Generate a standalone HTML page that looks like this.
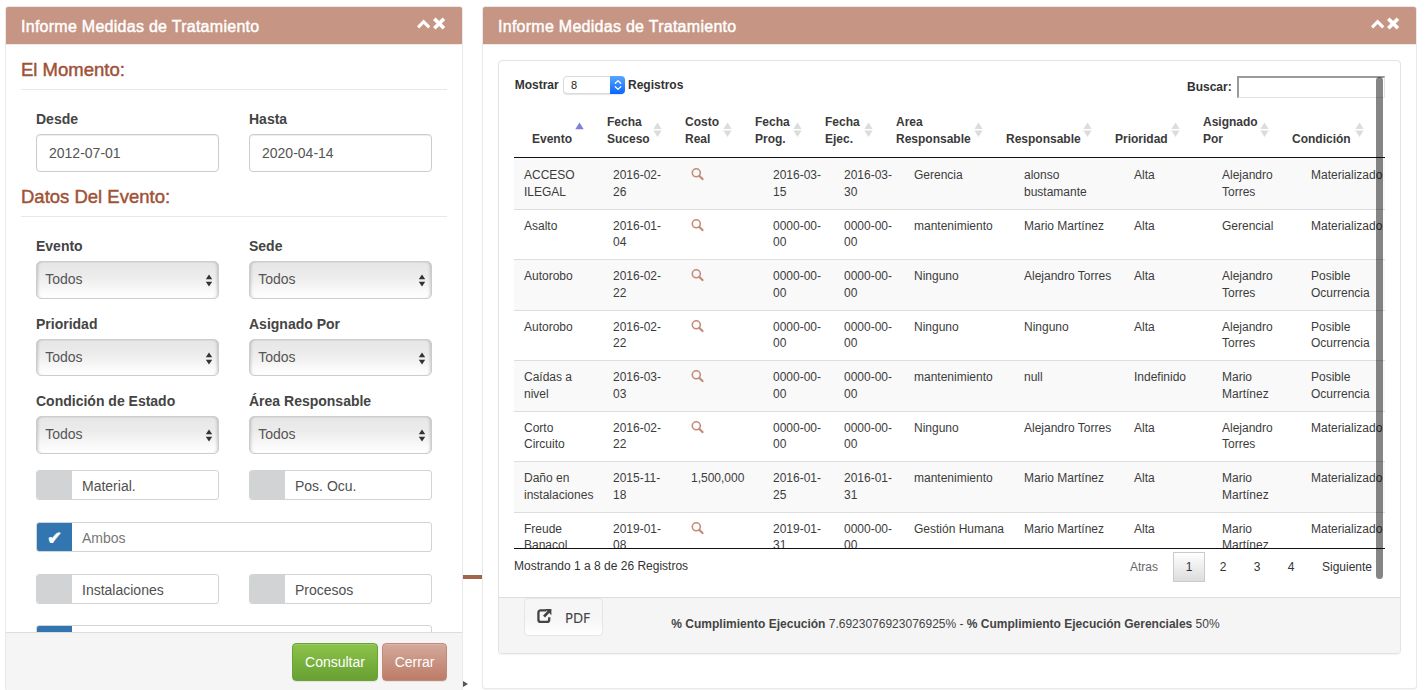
<!DOCTYPE html>
<html lang="es">
<head>
<meta charset="utf-8">
<title>Informe Medidas de Tratamiento</title>
<style>
*{box-sizing:border-box;}
html,body{margin:0;padding:0;}
body{width:1425px;height:690px;overflow:hidden;background:#fff;font-family:"Liberation Sans",Arial,Helvetica,sans-serif;font-size:14px;line-height:20px;color:#333;position:relative;}
.abs{position:absolute;}

/* ---------- panels ---------- */
.panel{position:absolute;background:#fff;border:1px solid #e9e9e9;border-radius:3px;box-shadow:0 1px 1px rgba(0,0,0,.05);}
.phead{position:absolute;left:0;right:0;top:0;height:37px;box-shadow:0 1px 0 #ececec;background:#c79584;border-radius:2px 2px 0 0;color:#fff;}
.ptitle{position:absolute;left:15px;top:10px;font-size:16px;line-height:20px;white-space:nowrap;letter-spacing:0.27px;-webkit-text-stroke:0.45px #fff;}
.picons{position:absolute;top:0;right:0;}

#left{left:5px;top:6px;width:458px;height:685px;}
#right{left:482px;top:6px;width:935px;height:683px;}

.legend{position:absolute;left:15px;width:426px;font-size:18.5px;line-height:26px;color:#9e5236;white-space:nowrap;-webkit-text-stroke:0.45px #9e5236;}
.lline{position:absolute;left:15px;width:426px;height:1px;background:#e8e8e8;}
.lbl{position:absolute;font-weight:bold;font-size:14px;line-height:20px;color:#444;white-space:nowrap;}
.inp{position:absolute;width:183px;height:37.5px;border:1px solid #ccc;border-radius:4px;background:#fff;box-shadow:inset 0 1px 1px rgba(0,0,0,.075);font-size:14px;line-height:37px;padding-left:12px;color:#555;}
.sel{position:absolute;width:183px;height:37.5px;border:1px solid #cdcdcd;border-radius:5px;background:linear-gradient(#e6e6e6 0%,#ececec 40%,#fbfbfb 85%,#fff 100%);box-shadow:inset 3px 0 3px -2px rgba(0,0,0,.18),inset -3px 0 3px -2px rgba(0,0,0,.18),inset 0 1px 1px rgba(0,0,0,.05);font-size:14px;line-height:35px;padding-left:8.2px;color:#555;}
.sel svg{position:absolute;right:5px;top:12px;}
.tog{position:absolute;height:29.5px;border:1px solid #d1d3d4;border-radius:3px;background:#fff;font-size:14px;line-height:30px;color:#505050;padding-left:45px;white-space:nowrap;overflow:hidden;}
.tog:before{content:"";position:absolute;left:0;top:0;bottom:0;width:35px;background:#d1d3d4;}
.tog.on{color:#777;}
.tog.on:before{background:#3276b1;}
.tog .ck{position:absolute;left:0;top:0;width:35px;text-align:center;color:#fff;font-size:18px;line-height:29px;font-family:"DejaVu Sans",sans-serif;-webkit-text-stroke:0.7px #fff;}

.lfoot{position:absolute;left:0;right:0;top:625px;bottom:0;background:#f5f5f5;border-top:1px solid #ddd;border-radius:0 0 3px 3px;}
.btn{position:absolute;height:38px;border-radius:4px;color:#fff;font-size:14px;line-height:36px;text-align:center;border:1px solid transparent;box-shadow:inset 0 1px 0 rgba(255,255,255,.15),0 1px 1px rgba(0,0,0,.075);}
.b-ok{left:286px;top:10px;width:86px;background:linear-gradient(#8bc34a,#68a033);border-color:#6aa234;}
.b-cl{left:376px;top:10px;width:65px;background:linear-gradient(#d4a99b,#bc7c67);border-color:#c18977;}

/* ---------- right ---------- */
.well{position:absolute;left:15px;top:53px;width:903px;height:594px;border:1px solid #e3e3e3;border-radius:4px;background:#fff;box-shadow:0 1px 1px rgba(0,0,0,.05);}
.wfoot{position:absolute;left:0;right:0;bottom:0;height:56px;background:#f5f5f5;border-top:1px solid #ddd;border-radius:0 0 3px 3px;}
.t12{font-size:12px;line-height:17px;color:#333;white-space:nowrap;}
.b{font-weight:bold;}
table{border-collapse:separate;border-spacing:0;table-layout:fixed;}
#thead th{font-size:12px;line-height:17px;font-weight:bold;color:#3a3a3a;text-align:left;vertical-align:bottom;padding:10px 18px;position:relative;white-space:nowrap;}
#thead th .srt{position:absolute;right:0;top:50%;margin-top:-11px;}
#tbody td{font-size:12px;line-height:16.75px;color:#3c3c3c;vertical-align:top;padding:8px 10px;border-top:1px solid #ddd;white-space:nowrap;}
#tbody tr:first-child td{border-top-color:#f9f9f9;}
#tbody tr:nth-child(odd) td{background:#f9f9f9;}
#tbody .mag{display:block;margin-top:0;}
.pg{position:absolute;top:552px;height:29.5px;font-size:12px;line-height:31px;color:#333;text-align:center;white-space:nowrap;}
</style>
</head>
<body>

<!-- background bits between the panels -->
<div class="abs" style="left:462px;top:575px;width:21px;height:4px;background:#a4634b;"></div>
<div class="abs" style="left:463px;top:681px;width:0;height:0;border-left:5px solid #555;border-top:3.5px solid transparent;border-bottom:3.5px solid transparent;"></div>

<!-- ================= LEFT PANEL ================= -->
<div class="panel" id="left">
  <div class="phead">
    <div class="ptitle">Informe Medidas de Tratamiento</div>
    <svg class="abs" style="left:410px;top:10px" width="32" height="16" viewBox="0 0 32 16">
      <path d="M1 9.2 L7.6 2.5 L14.3 9.2 L12.1 11.4 L7.6 6.9 L3.2 11.4 Z" fill="#fff"/>
      <path d="M17 3 L19.6 0.4 L23.1 3.9 L26.6 0.4 L29.2 3 L25.7 6.5 L29.2 10 L26.6 12.6 L23.1 9.1 L19.6 12.6 L17 10 L20.5 6.5 Z" fill="#fff"/>
    </svg>
  </div>

  <div class="abs" style="left:0;top:0;width:456px;height:0">
  <div class="legend" style="top:49.75px">El Momento:</div><div class="lline" style="top:82px"></div>
  <div class="lbl" style="left:30px;top:102px">Desde</div>
  <div class="lbl" style="left:243px;top:102px">Hasta</div>
  <div class="inp" style="left:30px;top:127px">2012-07-01</div>
  <div class="inp" style="left:243px;top:127px">2020-04-14</div>

  <div class="legend" style="top:176.75px">Datos Del Evento:</div><div class="lline" style="top:209px"></div>

  <div class="lbl" style="left:30px;top:229px">Evento</div>
  <div class="lbl" style="left:243px;top:229px">Sede</div>
  <div class="sel" style="left:30px;top:254px">Todos<svg width="8" height="13" viewBox="0 0 8 13"><path d="M4 0.5 L7.2 5.3 L0.8 5.3 Z M4 12.5 L7.2 7.7 L0.8 7.7 Z" fill="#333"/></svg></div>
  <div class="sel" style="left:243px;top:254px">Todos<svg width="8" height="13" viewBox="0 0 8 13"><path d="M4 0.5 L7.2 5.3 L0.8 5.3 Z M4 12.5 L7.2 7.7 L0.8 7.7 Z" fill="#333"/></svg></div>

  <div class="lbl" style="left:30px;top:306.5px">Prioridad</div>
  <div class="lbl" style="left:243px;top:306.5px">Asignado Por</div>
  <div class="sel" style="left:30px;top:331.5px">Todos<svg width="8" height="13" viewBox="0 0 8 13"><path d="M4 0.5 L7.2 5.3 L0.8 5.3 Z M4 12.5 L7.2 7.7 L0.8 7.7 Z" fill="#333"/></svg></div>
  <div class="sel" style="left:243px;top:331.5px">Todos<svg width="8" height="13" viewBox="0 0 8 13"><path d="M4 0.5 L7.2 5.3 L0.8 5.3 Z M4 12.5 L7.2 7.7 L0.8 7.7 Z" fill="#333"/></svg></div>

  <div class="lbl" style="left:30px;top:384px">Condición de Estado</div>
  <div class="lbl" style="left:243px;top:384px">Área Responsable</div>
  <div class="sel" style="left:30px;top:409px">Todos<svg width="8" height="13" viewBox="0 0 8 13"><path d="M4 0.5 L7.2 5.3 L0.8 5.3 Z M4 12.5 L7.2 7.7 L0.8 7.7 Z" fill="#333"/></svg></div>
  <div class="sel" style="left:243px;top:409px">Todos<svg width="8" height="13" viewBox="0 0 8 13"><path d="M4 0.5 L7.2 5.3 L0.8 5.3 Z M4 12.5 L7.2 7.7 L0.8 7.7 Z" fill="#333"/></svg></div>

  <div class="tog" style="left:30px;top:463px;width:183px">Material.</div>
  <div class="tog" style="left:243px;top:463px;width:183px">Pos. Ocu.</div>
  <div class="tog on" style="left:30px;top:515px;width:396px"><span class="ck">✔</span>Ambos</div>
  <div class="tog" style="left:30px;top:567px;width:183px">Instalaciones</div>
  <div class="tog" style="left:243px;top:567px;width:183px">Procesos</div>
  <div class="tog on" style="left:30px;top:618px;width:396px"><span class="ck">✔</span>Ambos</div>

  </div>
  <div class="lfoot">
    <div class="btn b-ok">Consultar</div>
    <div class="btn b-cl">Cerrar</div>
  </div>
</div>

<!-- ================= RIGHT PANEL ================= -->
<div class="panel" id="right">
  <div class="phead">
    <div class="ptitle">Informe Medidas de Tratamiento</div>
    <svg class="abs" style="left:887px;top:10px" width="32" height="16" viewBox="0 0 32 16">
      <path d="M1 9.2 L7.6 2.5 L14.3 9.2 L12.1 11.4 L7.6 6.9 L3.2 11.4 Z" fill="#fff"/>
      <path d="M17 3 L19.6 0.4 L23.1 3.9 L26.6 0.4 L29.2 3 L25.7 6.5 L29.2 10 L26.6 12.6 L23.1 9.1 L19.6 12.6 L17 10 L20.5 6.5 Z" fill="#fff"/>
    </svg>
  </div>

  <div class="well">
    <div class="wfoot"></div>
  </div>
</div>

<!-- right-panel contents, absolutely placed in page coordinates -->
<div class="abs t12 b" style="left:514.7px;top:76.6px">Mostrar</div>
<div class="abs" style="left:563px;top:76px;width:62px;height:17.5px;border:1px solid #dadada;border-radius:4px;background:#fff;box-shadow:0 1px 1px rgba(0,0,0,.1);font-size:11px;line-height:16.5px;padding-left:7px;color:#222;">8
  <div class="abs" style="right:-1px;top:-1px;width:15px;height:17.5px;background:linear-gradient(#58a7fb,#0866fe);border-radius:0 4px 4px 0;">
    <svg class="abs" style="left:3.5px;top:3px" width="8" height="12" viewBox="0 0 8 12"><path d="M1.3 4.3 L4 1.6 L6.7 4.3 M1.3 7.7 L4 10.4 L6.7 7.7" fill="none" stroke="#fff" stroke-width="1.3" stroke-linecap="round" stroke-linejoin="round"/></svg>
  </div>
</div>
<div class="abs t12 b" style="left:628px;top:76.6px">Registros</div>

<div class="abs t12 b" style="left:1187px;top:79px">Buscar:</div>
<div class="abs" style="left:1237px;top:76px;width:148px;height:21.5px;background:#fff;border-top:2px solid #9a9a9a;border-left:2px solid #9a9a9a;border-bottom:1px solid #e3e3e3;border-right:1px solid #e3e3e3;"></div>

<!-- header table -->
<div class="abs" style="left:514px;top:104px;width:871px;height:54px;border-bottom:1px solid #111;overflow:hidden;">
  <table id="thead" style="width:854.5px;height:53px"><thead><tr><th style="width:75px">Evento<svg class="srt" viewBox="0 0 19 19" width="19" height="19"><path d="M9.5 2.5 L13.7 9.3 L5.3 9.3 Z" fill="#8080d8"/></svg></th><th style="width:78px">Fecha<br>Suceso<svg class="srt" viewBox="0 0 19 19" width="19" height="19"><path d="M9.5 2.5 L13.6 9 L5.4 9 Z M9.5 17 L13.6 10.5 L5.4 10.5 Z" fill="#dcdcdc"/></svg></th><th style="width:70px">Costo<br>Real<svg class="srt" viewBox="0 0 19 19" width="19" height="19"><path d="M9.5 2.5 L13.6 9 L5.4 9 Z M9.5 17 L13.6 10.5 L5.4 10.5 Z" fill="#dcdcdc"/></svg></th><th style="width:70px">Fecha<br>Prog.<svg class="srt" viewBox="0 0 19 19" width="19" height="19"><path d="M9.5 2.5 L13.6 9 L5.4 9 Z M9.5 17 L13.6 10.5 L5.4 10.5 Z" fill="#dcdcdc"/></svg></th><th style="width:71px">Fecha<br>Ejec.<svg class="srt" viewBox="0 0 19 19" width="19" height="19"><path d="M9.5 2.5 L13.6 9 L5.4 9 Z M9.5 17 L13.6 10.5 L5.4 10.5 Z" fill="#dcdcdc"/></svg></th><th style="width:110px">Area<br>Responsable<svg class="srt" viewBox="0 0 19 19" width="19" height="19"><path d="M9.5 2.5 L13.6 9 L5.4 9 Z M9.5 17 L13.6 10.5 L5.4 10.5 Z" fill="#dcdcdc"/></svg></th><th style="width:109px">Responsable<svg class="srt" viewBox="0 0 19 19" width="19" height="19"><path d="M9.5 2.5 L13.6 9 L5.4 9 Z M9.5 17 L13.6 10.5 L5.4 10.5 Z" fill="#dcdcdc"/></svg></th><th style="width:88px">Prioridad<svg class="srt" viewBox="0 0 19 19" width="19" height="19"><path d="M9.5 2.5 L13.6 9 L5.4 9 Z M9.5 17 L13.6 10.5 L5.4 10.5 Z" fill="#dcdcdc"/></svg></th><th style="width:89px">Asignado<br>Por<svg class="srt" viewBox="0 0 19 19" width="19" height="19"><path d="M9.5 2.5 L13.6 9 L5.4 9 Z M9.5 17 L13.6 10.5 L5.4 10.5 Z" fill="#dcdcdc"/></svg></th><th style="width:94.5px">Condición<svg class="srt" viewBox="0 0 19 19" width="19" height="19"><path d="M9.5 2.5 L13.6 9 L5.4 9 Z M9.5 17 L13.6 10.5 L5.4 10.5 Z" fill="#dcdcdc"/></svg></th></tr></thead></table>
</div>
<!-- body table -->
<div class="abs" style="left:514px;top:158px;width:871px;height:391px;border-bottom:1px solid #111;overflow:hidden;">
  <table id="tbody" style="width:887px"><colgroup><col style="width:89px"><col style="width:78px"><col style="width:82px"><col style="width:71px"><col style="width:70px"><col style="width:110px"><col style="width:110px"><col style="width:88px"><col style="width:89px"><col style="width:100px"></colgroup><tbody>
<tr><td>ACCESO<br>ILEGAL</td><td>2016-02-<br>26</td><td><svg class="mag" viewBox="0 0 14 14" width="14" height="14"><circle cx="5.3" cy="5.8" r="4" fill="none" stroke="#c48b78" stroke-width="1.6"/><path d="M8.4 8.9 L11.5 12.1" stroke="#c48b78" stroke-width="2.2" stroke-linecap="round"/></svg></td><td>2016-03-<br>15</td><td>2016-03-<br>30</td><td>Gerencia</td><td>alonso<br>bustamante</td><td>Alta</td><td>Alejandro<br>Torres</td><td>Materializado</td></tr>
<tr><td>Asalto</td><td>2016-01-<br>04</td><td><svg class="mag" viewBox="0 0 14 14" width="14" height="14"><circle cx="5.3" cy="5.8" r="4" fill="none" stroke="#c48b78" stroke-width="1.6"/><path d="M8.4 8.9 L11.5 12.1" stroke="#c48b78" stroke-width="2.2" stroke-linecap="round"/></svg></td><td>0000-00-<br>00</td><td>0000-00-<br>00</td><td>mantenimiento</td><td>Mario Martínez</td><td>Alta</td><td>Gerencial</td><td>Materializado</td></tr>
<tr><td>Autorobo</td><td>2016-02-<br>22</td><td><svg class="mag" viewBox="0 0 14 14" width="14" height="14"><circle cx="5.3" cy="5.8" r="4" fill="none" stroke="#c48b78" stroke-width="1.6"/><path d="M8.4 8.9 L11.5 12.1" stroke="#c48b78" stroke-width="2.2" stroke-linecap="round"/></svg></td><td>0000-00-<br>00</td><td>0000-00-<br>00</td><td>Ninguno</td><td>Alejandro Torres</td><td>Alta</td><td>Alejandro<br>Torres</td><td>Posible<br>Ocurrencia</td></tr>
<tr><td>Autorobo</td><td>2016-02-<br>22</td><td><svg class="mag" viewBox="0 0 14 14" width="14" height="14"><circle cx="5.3" cy="5.8" r="4" fill="none" stroke="#c48b78" stroke-width="1.6"/><path d="M8.4 8.9 L11.5 12.1" stroke="#c48b78" stroke-width="2.2" stroke-linecap="round"/></svg></td><td>0000-00-<br>00</td><td>0000-00-<br>00</td><td>Ninguno</td><td>Ninguno</td><td>Alta</td><td>Alejandro<br>Torres</td><td>Posible<br>Ocurrencia</td></tr>
<tr><td>Caídas a<br>nivel</td><td>2016-03-<br>03</td><td><svg class="mag" viewBox="0 0 14 14" width="14" height="14"><circle cx="5.3" cy="5.8" r="4" fill="none" stroke="#c48b78" stroke-width="1.6"/><path d="M8.4 8.9 L11.5 12.1" stroke="#c48b78" stroke-width="2.2" stroke-linecap="round"/></svg></td><td>0000-00-<br>00</td><td>0000-00-<br>00</td><td>mantenimiento</td><td>null</td><td>Indefinido</td><td>Mario<br>Martínez</td><td>Posible<br>Ocurrencia</td></tr>
<tr><td>Corto<br>Circuito</td><td>2016-02-<br>22</td><td><svg class="mag" viewBox="0 0 14 14" width="14" height="14"><circle cx="5.3" cy="5.8" r="4" fill="none" stroke="#c48b78" stroke-width="1.6"/><path d="M8.4 8.9 L11.5 12.1" stroke="#c48b78" stroke-width="2.2" stroke-linecap="round"/></svg></td><td>0000-00-<br>00</td><td>0000-00-<br>00</td><td>Ninguno</td><td>Alejandro Torres</td><td>Alta</td><td>Alejandro<br>Torres</td><td>Materializado</td></tr>
<tr><td>Daño en<br>instalaciones</td><td>2015-11-<br>18</td><td>1,500,000</td><td>2016-01-<br>25</td><td>2016-01-<br>31</td><td>mantenimiento</td><td>Mario Martínez</td><td>Alta</td><td>Mario<br>Martínez</td><td>Materializado</td></tr>
<tr><td>Freude<br>Banacol</td><td>2019-01-<br>08</td><td><svg class="mag" viewBox="0 0 14 14" width="14" height="14"><circle cx="5.3" cy="5.8" r="4" fill="none" stroke="#c48b78" stroke-width="1.6"/><path d="M8.4 8.9 L11.5 12.1" stroke="#c48b78" stroke-width="2.2" stroke-linecap="round"/></svg></td><td>2019-01-<br>31</td><td>0000-00-<br>00</td><td>Gestión Humana</td><td>Mario Martínez</td><td>Alta</td><td>Mario<br>Martínez</td><td>Materializado</td></tr>
  </tbody></table>
</div>

<div class="abs t12" style="left:514px;top:558px">Mostrando 1 a 8 de 26 Registros</div>

<div class="pg" style="left:1118px;width:52px;color:#666">Atras</div>
<div class="pg" style="left:1173px;width:32px;border:1px solid #cacaca;background:linear-gradient(#fff,#dcdcdc);line-height:29px">1</div>
<div class="pg" style="left:1207px;width:32px">2</div>
<div class="pg" style="left:1241px;width:32px">3</div>
<div class="pg" style="left:1275px;width:32px">4</div>
<div class="pg" style="left:1310px;width:74px">Siguiente</div>

<!-- overlay scrollbar -->
<div class="abs" style="left:1376px;top:77px;width:7px;height:502px;border-radius:3.5px;background:rgba(0,0,0,.48);"></div>

<!-- well footer contents -->
<div class="abs" style="left:524px;top:598px;width:79px;height:38px;border:1px solid #e6e6e6;border-radius:4px;background:linear-gradient(#f6f6f6 55%,#fff);">
  <svg class="abs" style="left:10.5px;top:9px" width="16.5" height="16.5" viewBox="0 0 15 15"><path d="M9.5 2.2 H4.2 Q2.2 2.2 2.2 4.2 V10.6 Q2.2 12.6 4.2 12.6 H10 Q12 12.6 12 10.6 V8.4" fill="none" stroke="#444" stroke-width="2.1"/><path d="M8.2 0.8 H14 V6.6 L12 4.6 L8.2 8.6 L6.4 6.8 L10.3 2.9 Z" fill="#444"/></svg>
  <div class="abs" style="left:40px;top:10px;font-family:'DejaVu Sans','Liberation Sans',sans-serif;font-size:13.2px;line-height:20px;color:#444;">PDF</div>
</div>
<div class="abs t12" style="left:498px;top:616px;width:895px;text-align:center;color:#444"><span class="b">% Cumplimiento Ejecución</span> 7.6923076923076925% - <span class="b">% Cumplimiento Ejecución Gerenciales</span> 50%</div>

</body>
</html>
